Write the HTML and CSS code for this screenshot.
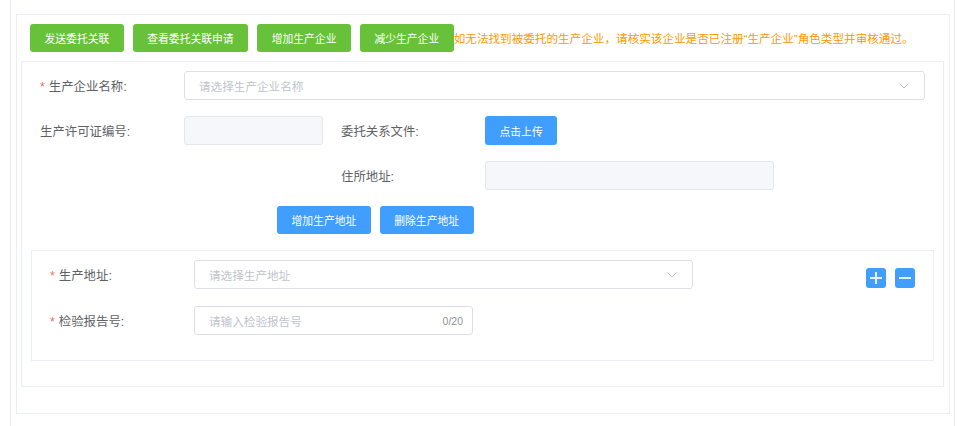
FILE: index.html
```
<!DOCTYPE html>
<html lang="zh">
<head>
    <meta charset="UTF-8">
    <meta name="viewport" content="width=device-width, initial-scale=1.0">
    <title>委托生产企业</title>
    <link rel="stylesheet" href="styles.css">
</head>
<body>
    <div class="page">
        <div class="card">
            <div class="toolbar">
                <button class="btn btn-success">发送委托关联</button>
                <button class="btn btn-success">查看委托关联申请</button>
                <button class="btn btn-success">增加生产企业</button>
                <button class="btn btn-success">减少生产企业</button>
                <span class="tip">如无法找到被委托的生产企业，请核实该企业是否已注册“生产企业”角色类型并审核通过。</span>
            </div>

            <div class="form-box">
                <div class="form-row">
                    <label class="form-label required">生产企业名称:</label>
                    <div class="select select-company">
                        <span class="placeholder">请选择生产企业名称</span>
                        <svg class="arrow" width="10" height="6" viewBox="0 0 10 6"><polyline points="0.5,0.5 5,5 9.5,0.5" fill="none" stroke="#c0c4cc" stroke-width="1"/></svg>
                    </div>
                </div>

                <div class="form-row">
                    <label class="form-label">生产许可证编号:</label>
                    <div class="input is-disabled input-license"></div>
                    <label class="form-label side-label">委托关系文件:</label>
                    <button class="btn btn-primary">点击上传</button>
                </div>

                <div class="form-row row-indent">
                    <label class="form-label">住所地址:</label>
                    <div class="input is-disabled input-address"></div>
                </div>

                <div class="form-row row-actions">
                    <button class="btn btn-primary">增加生产地址</button>
                    <button class="btn btn-primary">删除生产地址</button>
                </div>

                <div class="addr-box">
                    <div class="addr-fields">
                        <div class="form-row">
                            <label class="form-label required">生产地址:</label>
                            <div class="select select-addr">
                                <span class="placeholder">请选择生产地址</span>
                                <svg class="arrow" width="10" height="6" viewBox="0 0 10 6"><polyline points="0.5,0.5 5,5 9.5,0.5" fill="none" stroke="#c0c4cc" stroke-width="1"/></svg>
                            </div>
                        </div>
                        <div class="form-row">
                            <label class="form-label required">检验报告号:</label>
                            <div class="input input-report">
                                <span class="placeholder">请输入检验报告号</span>
                                <span class="count">0/20</span>
                            </div>
                        </div>
                    </div>
                    <div class="icon-btns">
                        <span class="icon-btn">
                            <svg width="20" height="20" viewBox="0 0 20 20"><path d="M4 10H16M10 4V16" stroke="#e6efff" stroke-width="2"/></svg>
                        </span>
                        <span class="icon-btn">
                            <svg width="20" height="20" viewBox="0 0 20 20"><path d="M4 10H16" stroke="#e6efff" stroke-width="2"/></svg>
                        </span>
                    </div>
                </div>
            </div>
        </div>
    </div>
</body>
</html>
```
FILE: styles.css
```
* {
    box-sizing: border-box;
}
body {
    margin: 0;
    font-family: "Liberation Sans", "Noto Sans CJK SC", sans-serif;
    background-color: #fff;
}
.page {
    margin-left: 10px;
    width: 945px;
    min-height: 100vh;
    border-left: 1px solid #e8e9f0;
    border-right: 1px solid #e8e9f0;
    padding: 14px 4px 0 5px;
}
.card {
    border: 1px solid #ebeef5;
    padding: 9px 5px 26px 4px;
}
.toolbar {
    display: flex;
    align-items: center;
    gap: 9px;
    padding-left: 9px;
    margin-bottom: 9px;
}
.btn {
    height: 28px;
    padding: 0 14.5px;
    border: none;
    border-radius: 3px;
    font-family: inherit;
    font-size: 10.8px;
    color: #fff;
    white-space: nowrap;
    cursor: pointer;
}
.btn-success {
    background-color: #67c23a;
}
.btn-primary {
    background-color: #409eff;
    height: 29px;
}
.row-actions .btn-primary {
    height: 28px;
}
.tip {
    margin-left: -9px;
    font-size: 11.6px;
    color: #ff9900;
    white-space: nowrap;
}
.form-box {
    border: 1px solid #ebeef5;
    padding: 9px 18px 25px 18px;
}
.form-row {
    display: flex;
    align-items: center;
    height: 29px;
    margin-bottom: 16px;
}
.form-label {
    width: 144px;
    flex-shrink: 0;
    font-size: 12.4px;
    color: #606266;
}
.form-label.required::before {
    content: "*";
    color: #f56c6c;
    margin-right: 4px;
}
.side-label {
    margin-left: 18px;
}
.row-indent {
    padding-left: 301px;
}
.row-actions {
    height: 28px;
    gap: 9px;
    padding-left: 237px;
}
.select,
.input {
    position: relative;
    height: 29px;
    display: flex;
    align-items: center;
    padding: 0 14px;
    border: 1px solid #dcdfe6;
    border-radius: 3px;
    font-size: 11.6px;
}
.placeholder {
    color: #c0c4cc;
    flex: 1;
}
.arrow {
    margin-right: 1px;
}
.is-disabled {
    background-color: #f5f7fa;
    border-color: #e4e7ed;
}
.select-company {
    width: 741px;
}
.input-license {
    width: 139px;
}
.input-address {
    width: 289px;
}
.addr-box {
    display: flex;
    justify-content: space-between;
    margin: 0 -9px;
    border: 1px solid #ebeef5;
    padding: 9px 18px 8px 18px;
}
.addr-box .form-row {
    margin-bottom: 17px;
}
.select-addr {
    width: 499px;
}
.input-report {
    width: 279px;
    padding-right: 9px;
}
.count {
    font-size: 10.5px;
    color: #909399;
}
.icon-btns {
    display: flex;
    gap: 9px;
    padding-top: 8px;
}
.icon-btn {
    width: 20px;
    height: 20px;
    border-radius: 3px;
    background-color: #409eff;
    display: flex;
}
```
